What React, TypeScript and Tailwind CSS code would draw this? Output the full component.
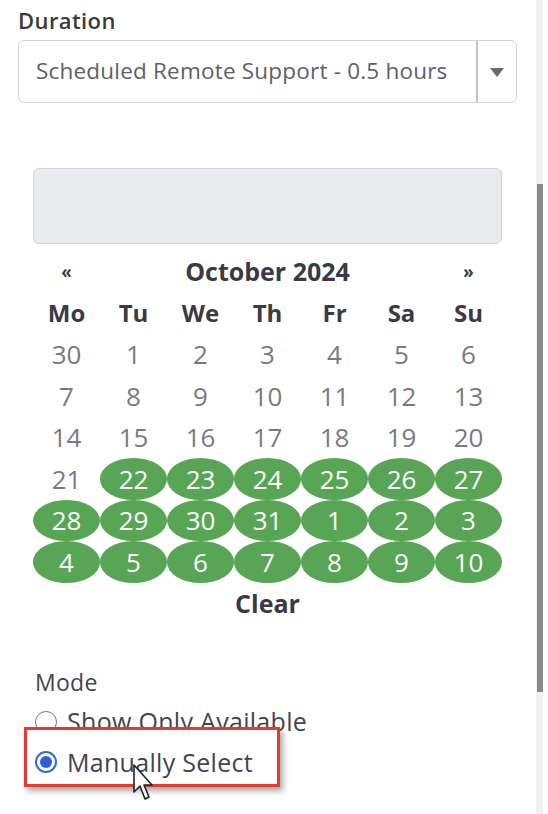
import React from "react";

const rows: { d: number; green: boolean }[][] = [
  [30, 1, 2, 3, 4, 5, 6].map((d) => ({ d, green: false })),
  [7, 8, 9, 10, 11, 12, 13].map((d) => ({ d, green: false })),
  [14, 15, 16, 17, 18, 19, 20].map((d) => ({ d, green: false })),
  [21, 22, 23, 24, 25, 26, 27].map((d, i) => ({ d, green: i > 0 })),
  [28, 29, 30, 31, 1, 2, 3].map((d) => ({ d, green: true })),
  [4, 5, 6, 7, 8, 9, 10].map((d) => ({ d, green: true })),
];

const days = ["Mo", "Tu", "We", "Th", "Fr", "Sa", "Su"];

export default function App() {
  return (
    <div
      className="relative w-[548px] h-[814px] bg-white overflow-hidden"
      style={{ fontFamily: "'Open Sans', 'Noto Sans', sans-serif" }}
    >
      {/* scrollbar */}
      <div className="absolute right-[5px] top-0 w-[7px] h-full bg-[#f0f0f0]">
        <div className="absolute left-[1px] right-0 top-[184px] h-[508px] bg-[#8a8a8a]" />
      </div>

      <div className="pl-[18px] pr-[31px] pt-[6px]">
        <div className="text-[22px] leading-[28px] font-semibold tracking-[0.4px] text-[#3a3a3a]">Duration</div>
        <div className="mt-[6px] flex h-[63px] w-[499px] rounded-[6px] border border-[#d4d4d4]">
          <div className="flex flex-1 items-center pl-[17px] text-[22.5px] leading-none text-[#5f5f66] tracking-[0.2px]">
            Scheduled Remote Support - 0.5 hours
          </div>
          <div className="flex w-[40px] items-center justify-center border-l-2 border-[#c4c4c4]">
            <svg width="14" height="10" viewBox="0 0 14 10">
              <path d="M0 1 L14 1 L7 10 Z" fill="#6b6b6b" />
            </svg>
          </div>
        </div>

        <div className="ml-[15px] mt-[65px] w-[469px]">
          <div className="h-[76px] rounded-[6px] border border-[#d0d3d8] bg-[#e9ebee]" />
          <div className="mt-[6px] grid grid-cols-7 text-[26px] leading-none text-[#3a3a44]">
            <div className="flex h-[42px] items-center justify-center font-bold text-[17px]">«</div>
            <div className="col-span-5 flex h-[42px] items-center justify-center font-bold text-[25px]">October 2024</div>
            <div className="flex h-[42px] items-center justify-center font-bold text-[17px]">»</div>
            {days.map((d) => (
              <div key={d} className="flex h-[41.5px] items-center justify-center font-bold text-[24px]">
                {d}
              </div>
            ))}
            {rows.flat().map((c, i) =>
              c.green ? (
                <div
                  key={i}
                  className="flex h-[41.5px] items-center justify-center rounded-[50%] bg-[#58a555] text-white"
                >
                  {c.d}
                </div>
              ) : (
                <div key={i} className="flex h-[41.5px] items-center justify-center text-[#7a7a7e]">
                  {c.d}
                </div>
              )
            )}
            <div className="col-span-7 flex h-[42px] items-center justify-center font-bold text-[25px]">Clear</div>
          </div>
        </div>

        <div className="ml-[17px] mt-[44px] text-[#444450]">
          <div className="h-[28px] flex items-center text-[23px] tracking-[0.3px] leading-none">Mode</div>
          <div className="flex h-[50px] items-center text-[25px] tracking-[0.3px] leading-none font-medium">
            <span className="mr-[10px] inline-block h-[22px] w-[22px] shrink-0 rounded-full border border-[#777] bg-white" />
            <span>Show Only Available</span>
          </div>
          <div className="relative flex h-[31px] items-center text-[25px] tracking-[0.3px] leading-none font-medium">
            <div className="absolute left-[-11px] top-[-20px] h-[60px] w-[256px] border-[3px] border-[#e53a2f] bg-white shadow-[3px_4px_6px_rgba(0,0,0,0.35)]" />
            <span className="relative mr-[10px] flex h-[22px] w-[22px] shrink-0 items-center justify-center rounded-full border-2 border-[#3a68d8] bg-white">
              <span className="h-[12px] w-[12px] rounded-full bg-[#2f5fd0]" />
            </span>
            <span className="relative">Manually Select</span>
            <svg
              className="absolute left-[98px] top-[17px]"
              width="22"
              height="38"
              viewBox="0 0 22 38"
            >
              <path
                d="M1 1 L1 28 L7 22 L12 35 L16 33 L11 21 L19 21 Z"
                fill="white"
                stroke="#222"
                strokeWidth="1.6"
                strokeLinejoin="round"
              />
            </svg>
          </div>
        </div>
      </div>
    </div>
  );
}
